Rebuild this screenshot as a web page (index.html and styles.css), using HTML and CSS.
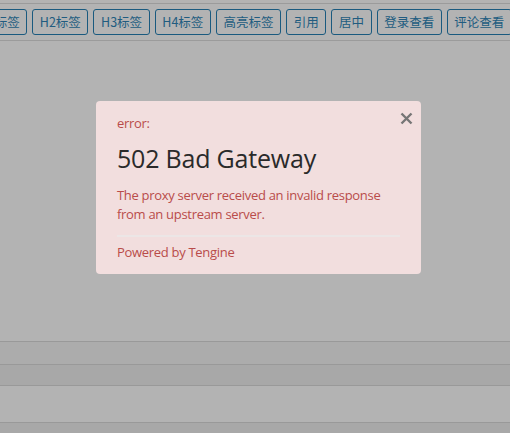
FILE: index.html
```html
<!DOCTYPE html>
<html lang="zh-CN">
<head>
  <meta charset="utf-8">
  <title>编辑器</title>
  <link rel="stylesheet" href="styles.css">
</head>
<body>
  <div class="toolbar">
    <button type="button" class="tag-btn first">H1标签</button>
    <button type="button" class="tag-btn">H2标签</button>
    <button type="button" class="tag-btn">H3标签</button>
    <button type="button" class="tag-btn">H4标签</button>
    <button type="button" class="tag-btn">高亮标签</button>
    <button type="button" class="tag-btn">引用</button>
    <button type="button" class="tag-btn">居中</button>
    <button type="button" class="tag-btn">登录查看</button>
    <button type="button" class="tag-btn">评论查看</button>
  </div>

  <div class="editor-area"></div>

  <div class="row row-a"></div>
  <div class="row row-b"></div>
  <div class="row row-c"></div>
  <div class="row row-d"></div>

  <!-- error dialog over the greyed page -->
  <div class="alert-box">
    <svg class="close" width="13" height="13" viewBox="0 0 13 13">
      <path d="M1.5 1.5 L11.5 11.5 M11.5 1.5 L1.5 11.5" stroke="#767676" stroke-width="2.4" fill="none"/>
    </svg>
    <div class="alert-label">error:</div>
    <h2 class="alert-title">502 Bad Gateway</h2>
    <p class="alert-text">The proxy server received an invalid response from an upstream server.</p>
    <div class="alert-footer">Powered by Tengine</div>
  </div>
</body>
</html>
```

FILE: styles.css
```css
html, body {
  margin: 0;
  height: 100%;
  overflow: hidden;
}
body {
  background-color: #b3b3b3;
  font-family: "Open Sans", "Noto Sans CJK SC", sans-serif;
  position: relative;
}

.toolbar {
  margin-top: 3px;
  border-top: 1px solid #9b9b9b;
  border-bottom: 1px solid #9b9b9b;
  padding: 5px 0 5px 0;
  display: flex;
  gap: 5px;
  white-space: nowrap;
}
.tag-btn {
  flex: none;
  height: 26px;
  padding: 0 6.6px;
  margin: 0;
  border: 1px solid #1a5a7f;
  border-radius: 3px;
  background: transparent;
  color: #215c80;
  font-family: "Noto Sans CJK SC", sans-serif;
  font-size: 12.5px;
  line-height: 24px;
}
.tag-btn.first {
  margin-left: -29px;
}

.editor-area {
  height: 300px;
}

.row {
  border-top: 1px solid #999999;
}
.row-a {
  height: 22px;
  background-color: #acacac;
}
.row-b {
  height: 20px;
  background-color: #a8a8a8;
}
.row-c {
  height: 36px;
  background-color: #b3b3b3;
}
.row-d {
  height: 20px;
  background-color: #a8a8a8;
}

.alert-box {
  position: absolute;
  left: 96px;
  top: 101px;
  width: 325px;
  height: 173px;
  box-sizing: border-box;
  padding: 13px 21px 0 21px;
  background-color: #f2dede;
  border-radius: 4px;
  color: #b94c4a;
  font-size: 13px;
  letter-spacing: -0.3px;
}
.close {
  position: absolute;
  right: 8px;
  top: 11px;
}
.alert-label {
  line-height: 18px;
}
.alert-title {
  margin: 10px 0 0 0;
  font-size: 25px;
  font-weight: 500;
  letter-spacing: -0.2px;
  line-height: 32px;
  color: #2a2a2a;
}
.alert-text {
  margin: 12px 0 0 0;
  line-height: 19px;
}
.alert-footer {
  margin-top: 11px;
  border-top: 2px solid #ece6e6;
  padding-top: 6px;
  line-height: 18px;
}
```
